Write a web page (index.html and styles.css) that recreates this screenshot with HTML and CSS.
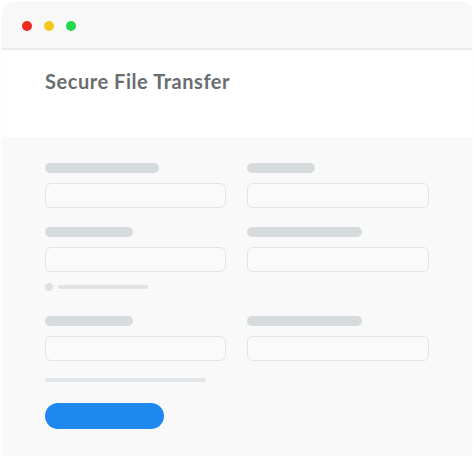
FILE: index.html
```html
<!DOCTYPE html>
<html>
<head>
<meta charset="utf-8">
<link rel="stylesheet" href="styles.css">
</head>
<body>
<div class="window">
  <div class="titlebar">
    <span class="dot red"></span>
    <span class="dot yellow"></span>
    <span class="dot green"></span>
  </div>
  <div class="header">
    <h1 class="title">Secure File Transfer</h1>
  </div>
  <div class="form">
    <div class="row">
      <div class="field">
        <div class="label w114"></div>
        <div class="input"></div>
      </div>
      <div class="field">
        <div class="label w68"></div>
        <div class="input"></div>
      </div>
    </div>
    <div class="row row-2">
      <div class="field">
        <div class="label w88"></div>
        <div class="input"></div>
        <div class="hint">
          <span class="hint-dot"></span>
          <span class="hint-line"></span>
        </div>
      </div>
      <div class="field">
        <div class="label w115"></div>
        <div class="input"></div>
      </div>
    </div>
    <div class="row row-3">
      <div class="field">
        <div class="label w88"></div>
        <div class="input"></div>
      </div>
      <div class="field">
        <div class="label w115"></div>
        <div class="input"></div>
      </div>
    </div>
    <div class="note"></div>
    <div class="button"></div>
  </div>
</div>
</body>
</html>
```

FILE: styles.css
```css
html, body {
  margin: 0;
  padding: 0;
  background: #ffffff;
  font-family: Lato, "Open Sans", sans-serif;
}

.window {
  margin: 2px 2px 0 2px;
  width: 470px;
  height: 454px;
  border-radius: 12px 12px 4px 4px;
  overflow: hidden;
  box-shadow: 0 0 2px rgba(0, 0, 0, 0.06);
  background: #f9f9f9;
}

.titlebar {
  height: 48px;
  background: #f8f8f8;
  border-bottom: 2px solid #ebebeb;
  display: flex;
  align-items: center;
  gap: 12px;
  padding-left: 20px;
  padding-top: 1px;
  box-sizing: border-box;
}

.dot {
  width: 10px;
  height: 10px;
  border-radius: 50%;
  display: block;
}
.red { background: #ee2a1e; }
.yellow { background: #f2c81c; }
.green { background: #22d84d; }

.header {
  height: 87px;
  background: #ffffff;
  display: flex;
  align-items: center;
  padding-left: 43px;
  padding-bottom: 25px;
  box-sizing: border-box;
}

.title {
  margin: 0;
  font-size: 20px;
  font-weight: 700;
  color: #6a6d70;
  letter-spacing: 0.55px;
}

.form {
  padding: 26px 43px 0 43px;
}

.row {
  display: grid;
  grid-template-columns: 181px 182px;
  column-gap: 21px;
}
.row-2 { margin-top: 19px; }
.row-3 { margin-top: 25px; }

.label {
  height: 10px;
  border-radius: 5px;
  background: #d6dbde;
}
.w114 { width: 114px; }
.w68 { width: 68px; }
.w88 { width: 88px; }
.w115 { width: 115px; }

.input {
  margin-top: 10px;
  height: 25px;
  box-sizing: border-box;
  border: 1.5px solid #e2e3e4;
  border-radius: 6px;
  background: #fafafa;
}

.hint {
  display: flex;
  align-items: center;
  gap: 5px;
  margin-top: 11px;
}
.hint-dot {
  width: 8px;
  height: 8px;
  border-radius: 50%;
  background: #dde1e3;
}
.hint-line {
  width: 90px;
  height: 4px;
  border-radius: 2px;
  background: #e0e3e5;
}

.note {
  margin-top: 17px;
  width: 161px;
  height: 4px;
  border-radius: 2px;
  background: #e3e6e8;
}

.button {
  margin-top: 21px;
  width: 119px;
  height: 26px;
  border-radius: 13px;
  background: #1e88f0;
}
```
